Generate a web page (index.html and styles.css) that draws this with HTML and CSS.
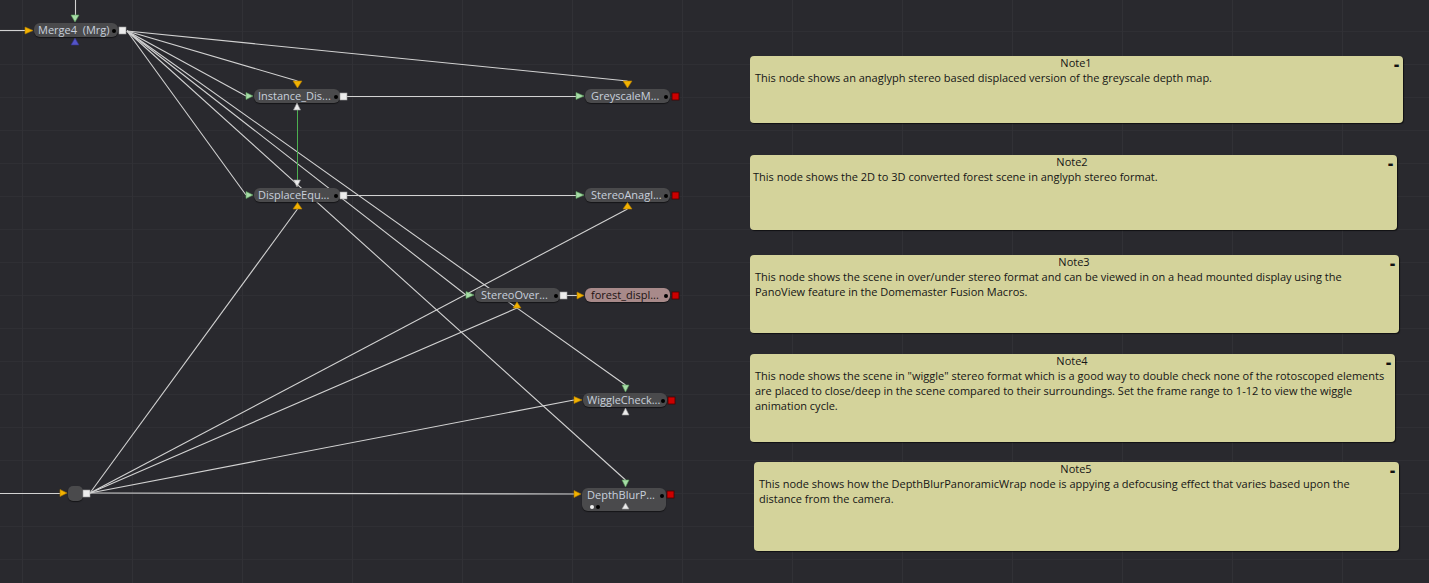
FILE: index.html
```html
<!DOCTYPE html>
<html>
<head>
<meta charset="utf-8">
<link rel="stylesheet" href="styles.css">
</head>
<body>
<div class="canvas">
  <svg class="wires" width="1429" height="583" viewBox="0 0 1429 583">
    <g stroke="#d2d2d2" stroke-width="1.1" fill="none">
      <line x1="75.5" y1="0" x2="75.5" y2="15"/>
      <line x1="0" y1="30.5" x2="25" y2="30.5"/>
      <line x1="127" y1="31" x2="627.5" y2="81"/>
      <line x1="127" y1="31" x2="297.5" y2="81"/>
      <line x1="127" y1="31" x2="246" y2="96"/>
      <line x1="127" y1="31" x2="246" y2="195"/>
      <line x1="127" y1="31" x2="466" y2="295"/>
      <line x1="127" y1="31" x2="625.5" y2="385"/>
      <line x1="127" y1="31" x2="625.5" y2="480"/>
      <line x1="347" y1="96.5" x2="576" y2="96.5"/>
      <line x1="347" y1="195.5" x2="576" y2="195.5"/>
      <line x1="567" y1="295.5" x2="577" y2="295.5"/>
      <line x1="0" y1="493.5" x2="60" y2="493.5"/>
      <line x1="90" y1="493" x2="297.5" y2="209"/>
      <line x1="90" y1="493" x2="627.5" y2="209"/>
      <line x1="90" y1="493" x2="517" y2="308"/>
      <line x1="90" y1="493" x2="574" y2="400"/>
      <line x1="90" y1="493" x2="574" y2="494"/>
    </g>
    <line x1="297.5" y1="110" x2="297.5" y2="180" stroke="#4caf50" stroke-width="1"/>
  </svg>

  <div class="node n-merge">Merge4  (Mrg)<span class="dot"></span></div>
  <div class="node n-inst">Instance_Dis...<span class="dot"></span></div>
  <div class="node n-grey">GreyscaleM...<span class="dot"></span></div>
  <div class="node n-disp">DisplaceEqu...<span class="dot"></span></div>
  <div class="node n-anag">StereoAnagl...<span class="dot"></span></div>
  <div class="node n-over">StereoOver...<span class="dot"></span></div>
  <div class="node n-forest">forest_displ...<span class="dot"></span></div>
  <div class="node n-wig">WiggleCheck...<span class="dot"></span></div>
  <div class="node n-blur"><div class="blur-top">DepthBlurP...<span class="dot"></span></div><div class="blur-bottom"><span class="wdot"></span><span class="bdot"></span></div></div>
  <div class="node n-small"></div>

  <svg class="ports" width="1429" height="583" viewBox="0 0 1429 583">
    <g class="orange">
      <polygon points="25,27 33,30.5 25,34"/>
      <polygon points="293,81 302,81 297.5,88"/>
      <polygon points="623,81 632,81 627.5,88"/>
      <polygon points="293,209 302,209 297.5,202.5"/>
      <polygon points="623,209 632,209 627.5,202.5"/>
      <polygon points="513,308 521,308 517,302"/>
      <polygon points="577,292 584,295.5 577,299"/>
      <polygon points="574,396.5 582,400 574,403.5"/>
      <polygon points="574,490.5 581,494 574,497.5"/>
      <polygon points="60,489.5 67,493 60,496.5"/>
    </g>
    <g class="green">
      <polygon points="71,15 79,15 75,22"/>
      <polygon points="246,92.5 253,96 246,99.5"/>
      <polygon points="576,92.5 584,96 576,99.5"/>
      <polygon points="246,191.5 253,195 246,198.5"/>
      <polygon points="576,191.5 584,195 576,198.5"/>
      <polygon points="466,291.5 474,295 466,298.5"/>
      <polygon points="622,385 629,385 625.5,392"/>
      <polygon points="622,480 629,480 625.5,487"/>
    </g>
    <polygon class="blue" points="71,45 79,45 75,38"/>
    <g class="white">
      <polygon points="293.5,110 300.5,110 297,103"/>
      <polygon points="293.5,180 300.5,180 297,187"/>
      <polygon points="622,415 629,415 625.5,408"/>
      <polygon points="622,509 629,509 625.5,503"/>
      <rect x="119" y="27" width="7" height="7"/>
      <rect x="340" y="93" width="7" height="7"/>
      <rect x="340" y="192" width="7" height="7"/>
      <rect x="560" y="292" width="7" height="7"/>
      <rect x="83" y="490" width="7" height="7"/>
    </g>
    <g class="red">
      <rect x="672" y="93" width="7" height="7"/>
      <rect x="672" y="192" width="7" height="7"/>
      <rect x="672" y="292" width="7" height="7"/>
      <rect x="668" y="397" width="7" height="7"/>
      <rect x="667" y="491" width="7" height="7"/>
    </g>
  </svg>

  <div class="note note1">
    <div class="note-title">Note1</div>
    <span class="note-min">-</span>
    <p>This node shows an anaglyph stereo based displaced version of the greyscale depth map.</p>
  </div>
  <div class="note note2">
    <div class="note-title">Note2</div>
    <span class="note-min">-</span>
    <p>This node shows the 2D to 3D converted forest scene in anglyph stereo format.</p>
  </div>
  <div class="note note3">
    <div class="note-title">Note3</div>
    <span class="note-min">-</span>
    <p>This node shows the scene in over/under stereo format and can be viewed in on a head mounted display using the PanoView feature in the Domemaster Fusion Macros.</p>
  </div>
  <div class="note note4">
    <div class="note-title">Note4</div>
    <span class="note-min">-</span>
    <p>This node shows the scene in "wiggle" stereo format which is a good way to double check none of the rotoscoped elements are placed to close/deep in the scene compared to their surroundings. Set the frame range to 1-12 to view the wiggle animation cycle.</p>
  </div>
  <div class="note note5">
    <div class="note-title">Note5</div>
    <span class="note-min">-</span>
    <p>This node shows how the DepthBlurPanoramicWrap node is appying a defocusing effect that varies based upon the distance from the camera.</p>
  </div>
</div>
</body>
</html>
```
FILE: styles.css
```css
html, body {
  margin: 0;
  padding: 0;
  background: #29292e;
}
.canvas {
  position: relative;
  width: 1429px;
  height: 583px;
  overflow: hidden;
  background-color: #29292e;
  background-image:
    linear-gradient(to right, #313136 1px, transparent 1px),
    linear-gradient(to bottom, #2f2f34 1px, transparent 1px);
  background-size: 110px 33px;
  background-position: 22px -2px;
  font-family: "Open Sans", "DejaVu Sans", sans-serif;
}
.wires, .ports {
  position: absolute;
  left: 0;
  top: 0;
}
.ports .orange polygon { fill: #f2b200; stroke: #b07a00; stroke-width: 0.6; }
.ports .green polygon { fill: #a6dca6; stroke: #5aa05a; stroke-width: 0.6; }
.ports .blue { fill: #5454c8; stroke: #33338a; stroke-width: 0.6; }
.ports .white polygon, .ports .white rect { fill: #ececec; stroke: #9a9a9a; stroke-width: 0.6; }
.ports .red rect { fill: #cc0000; stroke: #4a0000; stroke-width: 0.8; }

.node {
  position: absolute;
  height: 14px;
  box-sizing: border-box;
  background: #4a4a4c;
  border-radius: 6px;
  color: #c8d0dc;
  font-size: 11px;
  line-height: 14px;
  padding-left: 4px;
  white-space: pre;
  box-shadow: 0 1px 1px rgba(0,0,0,0.5);
}
.node .dot {
  position: absolute;
  right: 2px;
  top: 6px;
  width: 4px;
  height: 4px;
  border-radius: 50%;
  background: #000;
}
.n-merge { left: 34px; top: 23px; width: 84px; }
.n-inst { left: 254px; top: 89px; width: 86px; }
.n-grey { left: 585px; top: 89px; width: 85px; padding-left: 6px; }
.n-disp { left: 254px; top: 188px; width: 86px; }
.n-anag { left: 585px; top: 188px; width: 85px; padding-left: 6px; }
.n-over { left: 475px; top: 288px; width: 85px; padding-left: 6px; }
.n-forest { left: 585px; top: 288px; width: 85px; background: #a88a8a; color: #1c1212; padding-left: 6px; }
.n-wig { left: 583px; top: 393px; width: 84px; }
.n-blur { left: 582px; top: 488px; width: 84px; height: 23px; padding-left: 0; }
.blur-top { position: relative; height: 14px; padding-left: 5px; }
.blur-bottom { position: relative; height: 9px; }
.blur-bottom .wdot, .blur-bottom .bdot {
  position: absolute;
  top: 3px;
  width: 4px;
  height: 4px;
  border-radius: 50%;
}
.blur-bottom .wdot { left: 8px; background: #f0f0f0; }
.blur-bottom .bdot { left: 14px; background: #000; }
.n-small { left: 68px; top: 486px; width: 15px; height: 15px; border-radius: 5px; padding: 0; }

.note {
  position: absolute;
  box-sizing: border-box;
  background: #d4d39b;
  border-radius: 4px;
  color: #151515;
  font-size: 11px;
  line-height: 15px;
  padding: 0 6px 0 5px;
  box-shadow: 1px 1px 1px rgba(0,0,0,0.6);
}
.note-title {
  text-align: center;
  height: 14px;
  line-height: 14px;
}
.note-min {
  position: absolute;
  right: 4px;
  top: 0;
  font-size: 16px;
  font-weight: 800;
  line-height: 16px;
  color: #111;
}
.note p { margin: 0; }
.note1 { left: 750px; top: 56px; width: 653px; height: 67px; }
.note2 { left: 750px; top: 155px; width: 647px; height: 75px; padding-left: 3px; }
.note3 { left: 750px; top: 255px; width: 649px; height: 78px; }
.note4 { left: 750px; top: 354px; width: 645px; height: 88px; }
.note5 { left: 754px; top: 462px; width: 645px; height: 89px; }
```
